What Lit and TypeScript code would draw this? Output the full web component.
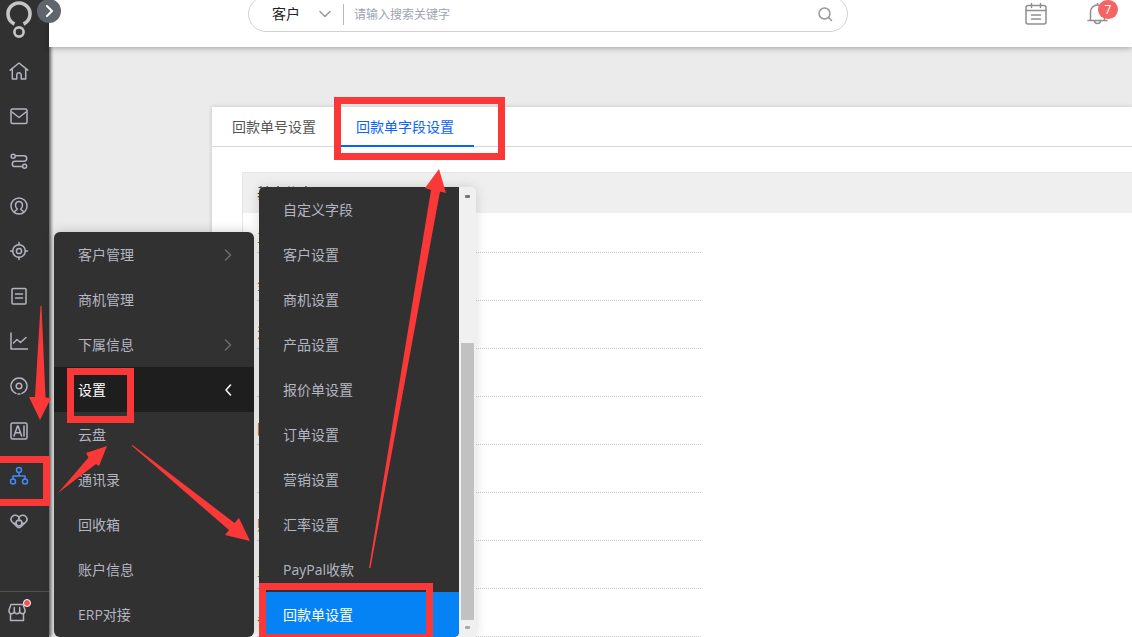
import { LitElement, html, svg, css } from "lit";
import { customElement, state } from "lit/decorators.js";
import { classMap } from "lit/directives/class-map.js";

const icons = {
  home: svg`<path d="M1.200 9.200 10 2l8.800 7.200M3.300 7.800V18h4.500v-4a2.200 2.200 0 0 1 4.400 0v4h4.500V7.800"/>`,
  mail: svg`<rect x="2" y="3" width="16" height="14.500" rx="1.500"/><path d="m3 6 7 5.500L17 6"/>`,
  flow: svg`<circle cx="4.200" cy="5.300" r="2"/><circle cx="15.600" cy="15.300" r="2"/><path d="M6.400 4.800H15a2.700 2.700 0 0 1 0 5.400H6a2.700 2.700 0 0 0 0 5.400h7.500"/>`,
  user: svg`<circle cx="10" cy="10" r="8"/><path d="M5.500 15.800c.3-1.500 2.700-1.500 2.700-2.900-2.600-2-2.400-7.400 1.800-7.400s4.400 5.400 1.800 7.400c0 1.400 2.400 1.400 2.700 2.900"/>`,
  target: svg`<circle cx="10" cy="10" r="6.300"/><circle cx="10" cy="10" r="2.600"/><path d="M10 1.500v2.200M10 16.300v2.200M1.500 10h2.200M16.300 10h2.200"/>`,
  doc: svg`<rect x="3" y="2.500" width="14" height="15.500" rx="1"/><path d="M6.500 8h7M6.500 12h7"/>`,
  chart: svg`<path d="M2 2v16h16.500M4.500 12 8 8.500l3.500 3L17 6.500"/>`,
  disc: svg`<circle cx="10" cy="10" r="2.800"/><path d="M7 17.400A8 8 0 1 1 13 17.400M9 18h2"/>`,
  ai: svg`<rect x="2" y="2" width="16" height="16" rx="1.500"/><path d="m5 15 3.500-10h.6L12.600 15M6.200 11.800h5.200M15 5v10"/>`,
  org: svg`<circle cx="10" cy="4" r="2.500"/><circle cx="4" cy="15.500" r="2.500"/><circle cx="16" cy="15.500" r="2.500"/><path d="M10 6.500v3.500M4 13v-3h12v3"/>`,
  hearts: svg`<path d="M10 6.500C8.500 3.800 5 3.800 3.200 5.500c-1.600 1.700-1.500 4 0 5.500L8 15.800c1.300 1.100 2.700 1.100 4 0L16.800 11c1.500-1.500 1.600-3.800 0-5.500C15 3.800 11.500 3.800 10 6.500z"/><circle cx="10" cy="12" r="2.900"/><path d="M10 6.500c.8 1.600.3 2.300-.6 3.200M10 6.500c-.8 1.600-.3 2.300.6 3.200M7 12l-2 .5M13 12l2 .5"/>`,
  store: svg`<path d="M4 2.500h12l2 5.500v1a2.600 2.600 0 0 1-5.300 0 2.700 2.700 0 0 1-5.400 0A2.600 2.600 0 0 1 2 9V8zM7.300 5.500V9M12.700 5.500V9M3.500 12v6.500h13V12"/>`,
};

type IconName = keyof typeof icons;

const nav: { icon: IconName; label: string }[] = [
  { icon: "home", label: "首页" },
  { icon: "mail", label: "邮件" },
  { icon: "flow", label: "流程" },
  { icon: "user", label: "客户" },
  { icon: "target", label: "商机" },
  { icon: "doc", label: "单据" },
  { icon: "chart", label: "统计" },
  { icon: "disc", label: "营销" },
  { icon: "ai", label: "AI" },
  { icon: "org", label: "管理" },
  { icon: "hearts", label: "伙伴" },
];

const menu = [
  { label: "客户管理", sub: true },
  { label: "商机管理" },
  { label: "下属信息", sub: true },
  { label: "设置", sub: true },
  { label: "云盘" },
  { label: "通讯录" },
  { label: "回收箱" },
  { label: "账户信息" },
  { label: "ERP对接" },
];

const submenu = [
  "自定义字段",
  "客户设置",
  "商机设置",
  "产品设置",
  "报价单设置",
  "订单设置",
  "营销设置",
  "汇率设置",
  "PayPal收款",
  "回款单设置",
];

const fields = ["主题", "金额", "汇率", "日期", "回款", "日期", "账户", "单号", "备注"];

@customElement("app-root")
export class AppRoot extends LitElement {
  @state() private activeNav: IconName = "org";
  @state() private activeMenu = "设置";
  @state() private activeSub = "回款单设置";
  @state() private activeTab = "回款单字段设置";

  static styles = css`
    :host {
      display: flex;
      position: relative;
      height: 100vh;
      overflow: hidden;
      background: #ebebeb;
      color: #555;
      font: 14px/20px "Open Sans", "Noto Sans CJK SC", sans-serif;
    }
    * { box-sizing: border-box; }
    a { color: inherit; text-decoration: none; }
    button { border: 0; padding: 0; margin: 0; background: none; font: inherit; color: inherit; }
    svg { display: block; }
    .icon { width: 20px; height: 20px; fill: none; stroke: currentColor; stroke-width: 1.5; stroke-linejoin: round; stroke-linecap: round; }

    .sidebar {
      display: flex;
      flex-direction: column;
      flex: none;
      position: relative;
      z-index: 1;
      width: 49px;
      background: #313131;
      color: #b2b4c0;
      box-shadow: 2px 0 3px rgba(0, 0, 0, 0.6);
    }
    .logo { height: 48px; padding-left: 5px; flex: none; }
    .nav { display: flex; align-items: center; height: 45px; padding-left: 9px; flex: none; }
    .nav.active { color: #4489f5; }
    .foot {
      display: flex;
      align-items: center;
      position: relative;
      margin-top: auto;
      height: 46px;
      padding: 0 0 6px 7px;
      border-top: 1px solid #505050;
    }
    .dot { position: absolute; left: 23px; top: 7px; width: 8px; height: 8px; border: 1px solid #fff; border-radius: 50%; background: #f05454; }
    .collapse {
      position: absolute;
      z-index: 4;
      left: 37px;
      top: -1px;
      display: grid;
      place-items: center;
      width: 24px;
      height: 24px;
      border-radius: 50%;
      background: #60656d;
      color: #fff;
    }
    .collapse .icon { stroke-width: 2; width: 12px; height: 12px; }

    .page { flex: 1; min-width: 0; }
    .header {
      display: flex;
      position: relative;
      z-index: 2;
      height: 47px;
      padding-left: 199px;
      padding-right: 22px;
      background: #fff;
      box-shadow: 0 1px 6px rgba(0, 0, 0, 0.32);
    }
    .search {
      display: flex;
      align-items: center;
      flex: 0 1 600px;
      height: 36px;
      margin-top: -4px;
      padding: 0 14px 0 23px;
      border: 1px solid #d2d2d2;
      border-radius: 18px;
    }
    .scope { position: relative; display: flex; align-items: center; width: 72px; height: 21px; border-right: 1px solid #b8b8b8; }
    .scope select { appearance: none; width: 100%; border: 0; padding: 0; background: none; font: inherit; color: #222; }
    .scope .icon { position: absolute; right: 12px; width: 12px; height: 12px; color: #999; pointer-events: none; }
    .query { flex: 1; min-width: 0; border: 0; padding: 1px 10px 0; outline: 0; background: none; font: inherit; font-size: 12px; }
    .query::placeholder { color: #a0a4b0; opacity: 1; }
    .find { color: #999; }
    .find .icon { width: 16px; height: 16px; }
    .tools { display: flex; gap: 38px; margin-left: auto; padding-top: 2px; color: #8f8f8f; }
    .tools button { position: relative; width: 24px; height: 24px; }
    .tools .icon { width: 24px; height: 24px; }
    .badge { position: absolute; left: 12px; top: -2px; width: 20px; height: 19px; border-radius: 10px; background: #f56463; color: #fff; font-size: 12px; line-height: 19px; text-align: center; }

    .content { padding: 60px 0 0 163px; }
    .card { min-height: 100vh; background: #fff; box-shadow: 0 0 4px rgba(0, 0, 0, 0.18); }
    .tabs { display: flex; height: 40px; border-bottom: 1px solid #d8d8d8; }
    .tab { height: 40px; padding: 2px 20px 0; border-bottom: 2px solid transparent; }
    .tab.active { color: #0c62fd; border-color: #0c62fd; }
    .panel { margin: 25px 0 0 30px; border: 1px solid #e6e6e6; border-right: 0; }
    .panel-title { height: 40px; margin: 0; padding: 0 14px; background: #efefef; font-size: 14px; font-weight: 400; line-height: 40px; color: #333; }
    .fields { list-style: none; width: 444px; margin: 0 0 0 14px; padding: 0; }
    .field { display: flex; align-items: flex-end; height: 48px; padding-bottom: 5px; border-bottom: 1px dotted #ccc; color: #a8662a; }
    .field:first-child { height: 40px; }

    .menu, .submenu { position: absolute; z-index: 3; background: #313131; color: #b4b6c2; overflow: hidden; }
    .menu { left: 54px; bottom: 0; width: 200px; border-radius: 6px; box-shadow: 0 0 12px rgba(0, 0, 0, 0.2); }
    .submenu { display: flex; left: 259px; bottom: 0; background: #f0f0f0; border-radius: 5px 5px 0 0; box-shadow: 0 0 12px rgba(0, 0, 0, 0.15); }
    .list { width: 200px; background: #313131; border-radius: 0 0 5px 0; overflow: hidden; }
    .item { display: flex; align-items: center; justify-content: space-between; height: 45px; padding: 0 20px 0 24px; }
    .item .icon { width: 12px; height: 12px; color: #6b6b6b; }
    .menu .item.active { background: #1e1e1e; color: #fff; }
    .menu .item.active .icon { color: #fff; }
    .submenu .item.active { background: #0583f5; color: #fff; }
    .scroll { display: flex; flex-direction: column; align-items: center; justify-content: space-between; width: 17px; padding: 8px 2px; }
    .nub { width: 5px; height: 3px; border-radius: 1px; background: #777; }
    .nub.off { background: #aaa; }
    .thumb { width: 13px; height: 277px; margin: auto 0 6px; background: #c1c1c1; }

    .marks { position: absolute; z-index: 5; left: 0; top: 0; width: 1132px; height: 637px; pointer-events: none; }
  `;

  private glyph(body: unknown, box = "0 0 20 20") {
    return html`<svg class="icon" viewBox=${box} aria-hidden="true">${body}</svg>`;
  }

  render() {
    return html`
      <nav class="sidebar" aria-label="主导航">
        <a class="logo" href="#" aria-label="首页">
          <svg width="28" height="40" viewBox="0 0 28 40" fill="none" stroke="#c6c6c6">
            <path d="M9.500 24A11 11 0 1 1 18.500 24" stroke-width="3.600" stroke-linecap="butt"/>
            <circle cx="14" cy="32" r="4.600" stroke-width="2.600"/>
          </svg>
        </a>
        ${nav.map(
          (n) => html`<a
            href="#"
            aria-label=${n.label}
            class=${classMap({ nav: true, active: n.icon === this.activeNav })}
            @click=${() => (this.activeNav = n.icon)}
            >${this.glyph(icons[n.icon])}</a>`
        )}
        <a class="foot" href="#" aria-label="商店">${this.glyph(icons.store)}<span class="dot"></span></a>
      </nav>
      <button class="collapse" aria-label="展开">${this.glyph(svg`<path d="m4 1 5 5-5 5"/>`, "0 0 12 12")}</button>

      <div class="page">
        <header class="header">
          <form class="search" role="search">
            <div class="scope">
              <select aria-label="搜索范围"><option>客户</option></select>
              ${this.glyph(svg`<path d="m1 3.500 5 5 5-5"/>`, "0 0 12 12")}
            </div>
            <input class="query" type="text" aria-label="搜索" placeholder="请输入搜索关键字" />
            <button class="find" type="button" aria-label="搜索">
              ${this.glyph(svg`<circle cx="7.500" cy="7.500" r="5.500"/><path d="m11.500 11.500 3 3"/>`, "0 0 16 16")}
            </button>
          </form>
          <div class="tools">
            <button aria-label="日程">
              ${this.glyph(svg`<rect x="2" y="3.500" width="20" height="18.500" rx="2"/><path d="M2 8.500h20M7.500 1.500v4M16.500 1.500v4M7.500 13h9M7.500 17h9"/>`, "0 0 24 24")}
            </button>
            <button aria-label="通知">
              ${this.glyph(svg`<path d="M2 18.500h19M4.500 18.500V10a7 7 0 0 1 14 0v8.500M11.500 3V1.500M8.500 18.500a3 3 0 0 0 6 0"/>`, "0 0 24 24")}
              <span class="badge">7</span>
            </button>
          </div>
        </header>

        <main class="content">
          <section class="card">
            <div class="tabs" role="tablist">
              ${["回款单号设置", "回款单字段设置"].map(
                (t) => html`<button
                  role="tab"
                  aria-selected=${t === this.activeTab}
                  class=${classMap({ tab: true, active: t === this.activeTab })}
                  @click=${() => (this.activeTab = t)}
                >${t}</button>`
              )}
            </div>
            <div class="panel">
              <h2 class="panel-title">基本信息</h2>
              <ul class="fields">${fields.map((f) => html`<li class="field">${f}</li>`)}</ul>
            </div>
          </section>
        </main>
      </div>

      <nav class="menu" aria-label="管理">
        ${menu.map((m) => {
          const active = m.label === this.activeMenu;
          const chevron = active ? svg`<path d="M8.500 1 4 6l4.500 5"/>` : svg`<path d="m3.500 1 5 5-5 5"/>`;
          return html`<a href="#" class=${classMap({ item: true, active })} @click=${() => (this.activeMenu = m.label)}
            >${m.label}${m.sub ? this.glyph(chevron, "0 0 12 12") : null}</a>`;
        })}
      </nav>

      <nav class="submenu" aria-label="设置">
        <div class="list">
          ${submenu.map(
            (s) => html`<a href="#" class=${classMap({ item: true, active: s === this.activeSub })} @click=${() => (this.activeSub = s)}>${s}</a>`
          )}
        </div>
        <div class="scroll" aria-hidden="true">
          <span class="nub"></span><span class="thumb"></span><span class="nub off"></span>
        </div>
      </nav>

      <svg class="marks" viewBox="0 0 1132 637" aria-hidden="true">
        <g fill="none" stroke="#fb3838" stroke-width="7">
          <rect x="337.500" y="100.500" width="164" height="56"/>
          <rect x="70.500" y="371.500" width="60" height="48"/>
          <rect x="-3.500" y="459.500" width="50" height="43"/>
          <rect x="262.500" y="586.500" width="167" height="51"/>
        </g>
        <g fill="#fb3838">
          <path d="M40.500 306h1L45.500 397.500 51 398 40 420 29 397 35 397z"/>
          <path d="M58 493 88.500 457.500 86 453 107 446 99 466 96 464z"/>
          <path d="M131.500 445.500 132.500 445 234.500 523 239 518 250 541 225 535 229 530z"/>
          <path d="M369 568 431 190 425 188 439 169 446 193 440 191.500 370.500 568z"/>
        </g>
      </svg>
    `;
  }
}
